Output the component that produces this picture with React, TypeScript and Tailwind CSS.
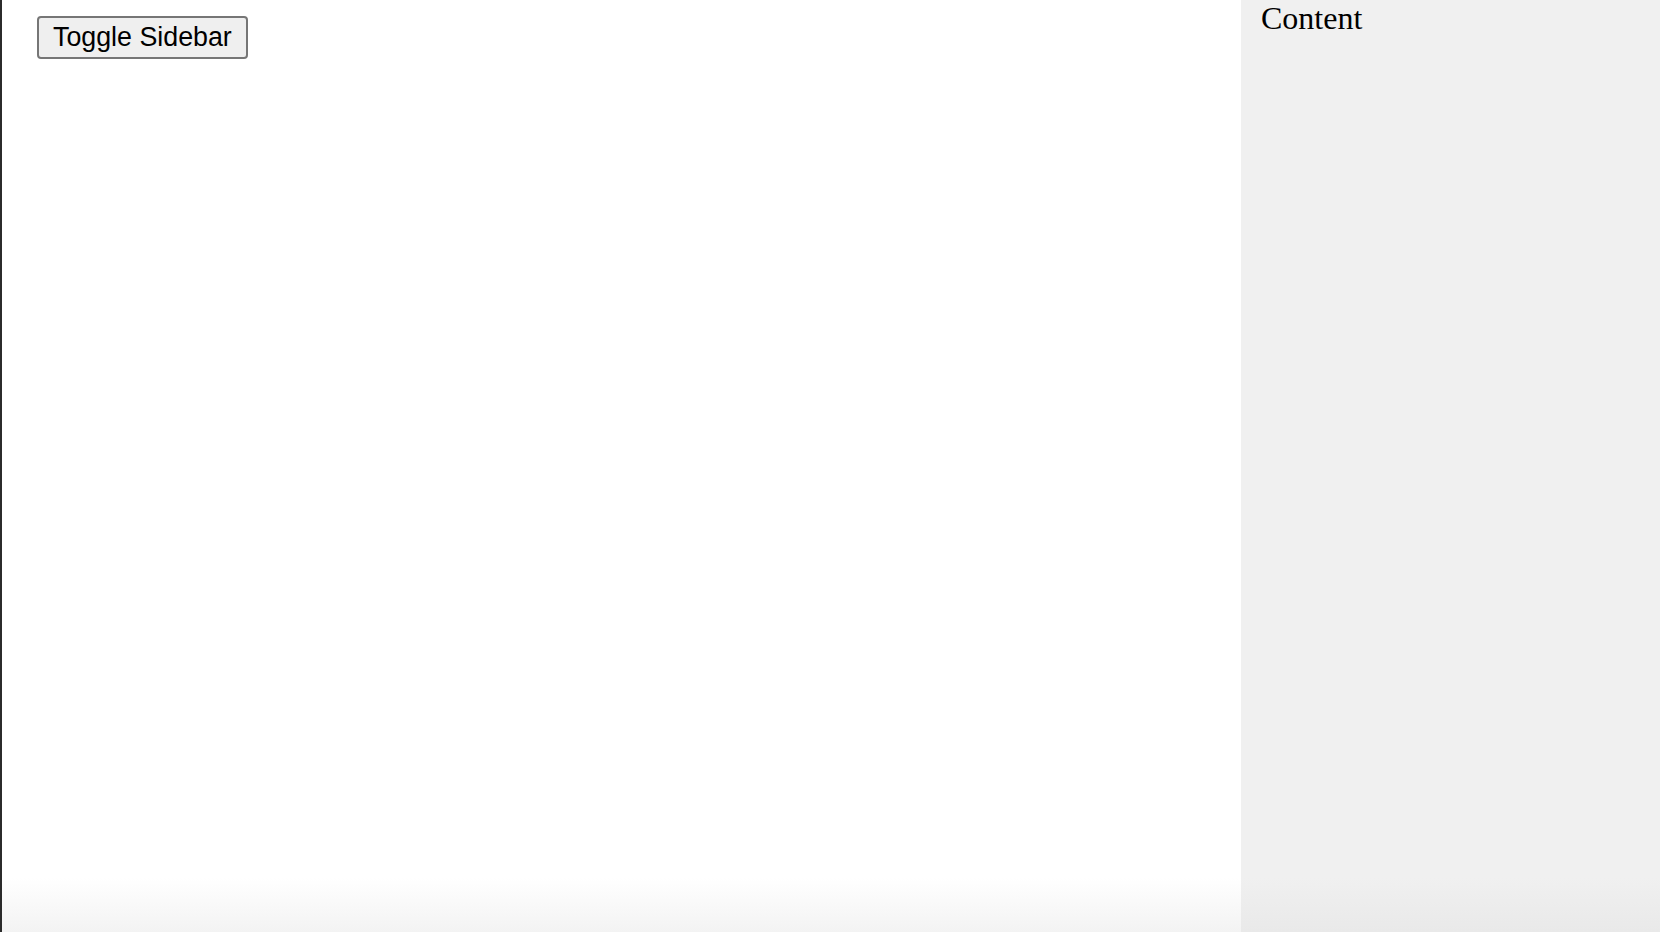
import React from 'react';

const App = () => {
  return (
    <div className="flex h-[932px] w-full overflow-hidden bg-white">
      <div className="flex flex-1 flex-col border-l-2 border-[#2b2b2b]">
        <div className="flex-1 pl-[35px] pt-[16px]">
          <button
            className="h-[43px] rounded-[4px] border-2 border-[#767676] bg-[#efefef] px-[14px] text-[26.8px] leading-[31px] text-black"
            style={{ fontFamily: '"Liberation Sans", Arial, sans-serif' }}
          >
            Toggle Sidebar
          </button>
        </div>
        <div className="h-[54px] bg-gradient-to-b from-white to-[#f3f3f3]" />
      </div>
      <div className="flex w-[419px] flex-col bg-[#f0f0f0]">
        <div
          className="flex-1 pl-[20px] text-[32px] leading-[36px] text-black"
          style={{ fontFamily: '"Liberation Serif", "Times New Roman", serif' }}
        >
          Content
        </div>
        <div className="h-[54px] bg-gradient-to-b from-[#f0f0f0] to-[#e9e9e9]" />
      </div>
    </div>
  );
};

export default App;
